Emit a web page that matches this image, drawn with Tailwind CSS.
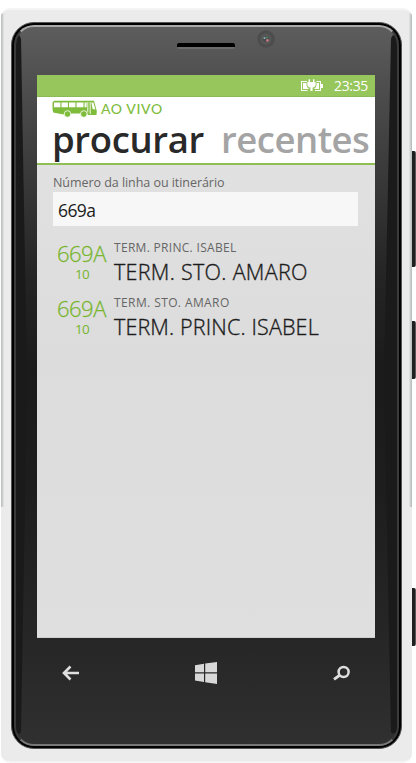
<!DOCTYPE html>
<html lang="pt-BR">
<head>
<meta charset="utf-8">
<title>Ao Vivo</title>
<script src="https://cdn.jsdelivr.net/npm/@tailwindcss/browser@4"></script>
</head>
<body class="bg-white w-[416px] h-[763px] overflow-hidden font-['Open_Sans','Noto_Sans',sans-serif]">
<div class="relative w-[416px] h-[763px] pt-[8px] pl-px">
  <!-- side buttons -->
  <div class="absolute left-[411px] top-[151px] w-[5px] h-[116px] rounded-r-xs bg-linear-to-r from-[#202020] from-70% to-[#777]"></div>
  <div class="absolute left-[411px] top-[321px] w-[5px] h-[58px] rounded-r-xs bg-linear-to-r from-[#202020] from-70% to-[#777]"></div>
  <div class="absolute left-[411px] top-[588px] w-[5px] h-[58px] rounded-r-xs bg-linear-to-r from-[#202020] from-70% to-[#777]"></div>
  <!-- shell -->
  <div class="relative w-[411px] h-[755px] rounded-[9px] bg-[#ebebeb] border-y-2 border-[#f4f4f4] pt-[12px] pl-[10px]">
    <div class="absolute left-0 top-[3px] w-[3px] h-[494px] bg-linear-to-r from-[#b4b9b9] to-[#e5e5e5] rounded-tl-lg"></div>
    <div class="absolute right-0 top-[3px] w-[3px] h-[494px] bg-linear-to-l from-[#b4b9b9] to-[#e5e5e5] rounded-tr-lg"></div>
    <div class="relative w-[391px] h-[727px] rounded-[23px] bg-black border border-[#555] p-[2px]">
      <div class="relative w-full h-full rounded-[20px] overflow-hidden border-2 border-t-[#aaa] border-x-[#3b3b3b] border-b-[#777] bg-[linear-gradient(#5d5d5d_0px,#505050_50px,#3b3b3b_140px,#242424_250px,#1b1b1b_340px,#1d1d1d_460px,#262626_610px,#303030_720px)]">
        <svg class="absolute left-0 top-0 w-[381px] h-[719px]" viewBox="0 0 381 719">
          <path d="M0 10Q3 5 5 12L11 350 5 705Q3 709 0 704Z" fill="#1a1a1a"/>
          <path d="M381 10Q377 5 375 12L368 350 375 705Q377 709 381 704Z" fill="#1a1a1a"/>
        </svg>
        <div class="absolute left-[161px] top-[16px] w-[58px] h-[6px] rounded-xs bg-black border-b-2 border-[#6c6c6c]"></div>
        <svg class="absolute left-[241px] top-[3px] w-[18px] h-[18px]" viewBox="0 0 18 18">
          <circle cx="9" cy="9" r="8.7" fill="#4d4d4d"/><circle cx="9" cy="9" r="5.5" fill="#575757"/><circle cx="9" cy="9" r="3" fill="#444c4b"/><circle cx="7.5" cy="8" r="1.1" fill="#8fb0c2"/><circle cx="10.4" cy="10.4" r="1.3" fill="#d07888"/><circle cx="10" cy="7.3" r=".9" fill="#60915e"/>
        </svg>
        <!-- screen -->
        <main class="ml-[21px] mt-[48px] w-[338px] h-[563px] overflow-hidden bg-linear-to-b from-[#e3e3e3] via-[#dcdcdc] to-[#dfdfdf] border-b border-[#cfcfcf]">
          <header class="h-[22px] bg-[#96c65c] border-b border-[#8cba56] flex justify-end items-start pr-[7px]">
            <svg class="w-[24px] h-[15px] mt-[3px] mr-[10px]" viewBox="0 0 24 15">
              <path d="M7 3.5H1.5V12.5H7.5M16.5 3.5H20.5V12.5H15" fill="none" stroke="#fff" stroke-width="1.1"/>
              <path d="M3 5H6.5V7Q6.5 9.5 9 11H3ZM16.5 5H19V11H14Q16.5 9.5 16.5 7ZM21 6H23V10H21Z" fill="#fff"/>
              <path d="M8.6 1.2H10V4H13V1.2H14.4V4H15.6V6.5Q15.6 9 12.6 9.6V13H10.4V9.6Q7.4 9 7.4 6.5V4H8.6Z" fill="#fff"/>
            </svg>
            <span class="text-[14px] leading-[21px] text-white tracking-[-0.35px] whitespace-nowrap">23:35</span>
          </header>
          <section class="h-[66px] bg-white">
            <div class="h-[23px] flex pl-[15px] pt-[3px]">
              <svg class="w-[46px] h-[18px]" viewBox="0 0 46 18">
                <path d="M2 .8H42L44.8 11 44.5 15H36L35 13.5H20L17 14.5H12L9 14 1.2 12.5 .5 9V2.5Z" fill="#80bc3c"/>
                <path d="M2 2.4H8.4V7.2H2ZM9.5 2.4H15.9V7.2H9.5ZM17 2.4H23.4V7.2H17ZM24.5 2.4H31.5V7.2H24.5ZM32.6 2.4H34.6V7.2H32.6ZM39.4 2.4H41.4L43.4 9.5 40.6 9Z" fill="#fff"/>
                <path d="M35.8 2V12.5M38.2 2V14" stroke="#fff" stroke-width=".9"/>
                <circle cx="15.5" cy="14" r="3.3" fill="#80bc3c" stroke="#fff" stroke-width=".8"/><circle cx="31.8" cy="14" r="3.3" fill="#80bc3c" stroke="#fff" stroke-width=".8"/>
              </svg>
              <span class="ml-[3px] h-[18px] font-[Lato] font-medium text-[14px] leading-[18px] tracking-[0.6px] text-[#80bc3c] whitespace-nowrap">AO VIVO</span>
            </div>
            <div class="flex h-[43px] leading-[38px] text-[36.5px] font-semibold whitespace-nowrap">
              <span class="ml-[15px] w-[169px] tracking-[-0.35px] text-[#292929]">procurar</span>
              <span class="tracking-[-0.5px] text-[#a4a4a4]">recentes</span>
            </div>
          </section>
          <div class="h-[2px] bg-[#8fbf54]"></div>
          <section class="pl-[16px] pt-[7px]">
            <label class="block h-[20px] leading-[22px] text-[12.5px] tracking-[-0.05px] text-[#666] whitespace-nowrap">Número da linha ou itinerário</label>
            <div class="w-[305px] h-[34px] bg-[#f7f7f7] pl-[5px] text-[17.5px] leading-[36px] tracking-[-0.6px] text-[#1c1c1c]">669a</div>
            <ul class="mt-[12px]">
              <li class="flex h-[55px] whitespace-nowrap">
                <div class="w-[61px] pl-[4px] text-[#77b52e]">
                  <div class="h-[31px] leading-[31px] text-[22px] font-light tracking-[-0.5px] [-webkit-text-stroke:0.3px]">669A</div>
                  <div class="pl-[18px] leading-[10px] text-[13.5px] tracking-[-0.7px]">10</div>
                </div>
                <div>
                  <div class="h-[18px] leading-[19px] text-[12px] text-[#666] tracking-[0.3px]">TERM. PRINC. ISABEL</div>
                  <div class="leading-[31px] text-[21.5px] font-light text-[#1c1c1c] tracking-[0.3px] [-webkit-text-stroke:0.35px]">TERM. STO. AMARO</div>
                </div>
              </li>
              <li class="flex h-[55px] whitespace-nowrap">
                <div class="w-[61px] pl-[4px] text-[#77b52e]">
                  <div class="h-[31px] leading-[31px] text-[22px] font-light tracking-[-0.5px] [-webkit-text-stroke:0.3px]">669A</div>
                  <div class="pl-[18px] leading-[10px] text-[13.5px] tracking-[-0.7px]">10</div>
                </div>
                <div>
                  <div class="h-[18px] leading-[19px] text-[12px] text-[#666] tracking-[0.4px]">TERM. STO. AMARO</div>
                  <div class="leading-[31px] text-[21.5px] font-light text-[#1c1c1c] tracking-[0.15px] [-webkit-text-stroke:0.35px]">TERM. PRINC. ISABEL</div>
                </div>
              </li>
            </ul>
          </section>
        </main>
        <!-- hardware keys -->
        <nav class="flex justify-between items-center h-[70px] pl-[46px] pr-[47px]">
          <svg class="w-[17px] h-[16px]" viewBox="0 0 17 16"><path d="M2 8H17M8.5 1.5L2 8 8.5 14.5" fill="none" stroke="#dedede" stroke-width="2.6"/></svg>
          <svg class="w-[22px] h-[22px]" viewBox="0 0 22 22"><path d="M0 3.2L9 1.8V10.3H0ZM10.2 1.6L22 0V10.3H10.2ZM0 11.6H9V20L0 18.6ZM10.2 11.6H22V22L10.2 20.2Z" fill="#d8d8d8"/></svg>
          <svg class="w-[17px] h-[16px]" viewBox="0 0 17 16"><circle cx="10.6" cy="7" r="5" fill="none" stroke="#dedede" stroke-width="2.5"/><path d="M7 10L1 14.4" stroke="#dedede" stroke-width="2.8"/></svg>
        </nav>
      </div>
    </div>
  </div>
</div>
</body>
</html>
